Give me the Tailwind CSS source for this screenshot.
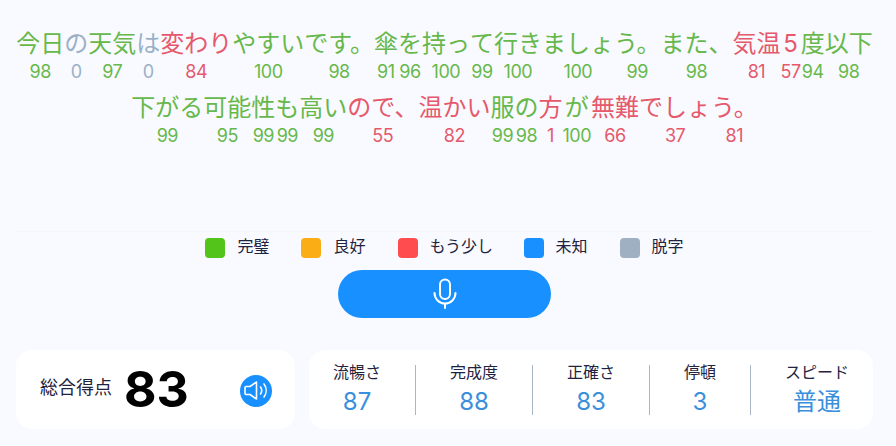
<!DOCTYPE html>
<html lang="ja">
<head>
<meta charset="utf-8">
<script src="https://cdn.jsdelivr.net/npm/@tailwindcss/browser@4"></script>
</head>
<body class="m-0 bg-[#f8faff]">
<div class="flex h-[446px] w-[889px] flex-col overflow-hidden font-['Inter','Noto_Sans_CJK_JP',sans-serif]">
  <div class="h-[231px] px-2 pt-[26px]">
    <div class="flex flex-wrap justify-center gap-y-2 text-center">
      <div class="text-[#67b84b]"><div class="text-2xl leading-9">今日</div><div class="text-lg leading-5 tracking-tight">98</div></div>
      <div class="text-[#9bb0c7]"><div class="text-2xl leading-9">の</div><div class="text-lg leading-5 tracking-tight">0</div></div>
      <div class="text-[#67b84b]"><div class="text-2xl leading-9">天気</div><div class="text-lg leading-5 tracking-tight">97</div></div>
      <div class="text-[#9bb0c7]"><div class="text-2xl leading-9">は</div><div class="text-lg leading-5 tracking-tight">0</div></div>
      <div class="text-[#e5596b]"><div class="text-2xl leading-9">変わり</div><div class="text-lg leading-5 tracking-tight">84</div></div>
      <div class="text-[#67b84b]"><div class="text-2xl leading-9">やすい</div><div class="text-lg leading-5 tracking-tight">100</div></div>
      <div class="text-[#67b84b]"><div class="text-2xl leading-9">です。</div><div class="text-lg leading-5 tracking-tight">98</div></div>
      <div class="text-[#67b84b]"><div class="text-2xl leading-9">傘</div><div class="text-lg leading-5 tracking-tight">91</div></div>
      <div class="text-[#67b84b]"><div class="text-2xl leading-9">を</div><div class="text-lg leading-5 tracking-tight">96</div></div>
      <div class="text-[#67b84b]"><div class="text-2xl leading-9">持っ</div><div class="text-lg leading-5 tracking-tight">100</div></div>
      <div class="text-[#67b84b]"><div class="text-2xl leading-9">て</div><div class="text-lg leading-5 tracking-tight">99</div></div>
      <div class="text-[#67b84b]"><div class="text-2xl leading-9">行き</div><div class="text-lg leading-5 tracking-tight">100</div></div>
      <div class="text-[#67b84b]"><div class="text-2xl leading-9">ましょ</div><div class="text-lg leading-5 tracking-tight">100</div></div>
      <div class="text-[#67b84b]"><div class="text-2xl leading-9">う。</div><div class="text-lg leading-5 tracking-tight">99</div></div>
      <div class="text-[#67b84b]"><div class="text-2xl leading-9">また、</div><div class="text-lg leading-5 tracking-tight">98</div></div>
      <div class="text-[#e5596b]"><div class="text-2xl leading-9">気温</div><div class="text-lg leading-5 tracking-tight">81</div></div>
      <div class="text-[#e5596b]"><div class="text-2xl leading-9">5</div><div class="text-lg leading-5 tracking-tight">57</div></div>
      <div class="text-[#67b84b]"><div class="text-2xl leading-9">度</div><div class="text-lg leading-5 tracking-tight">94</div></div>
      <div class="text-[#67b84b]"><div class="text-2xl leading-9">以下</div><div class="text-lg leading-5 tracking-tight">98</div></div>
      <div class="text-[#67b84b]"><div class="text-2xl leading-9">下がる</div><div class="text-lg leading-5 tracking-tight">99</div></div>
      <div class="text-[#67b84b]"><div class="text-2xl leading-9">可能</div><div class="text-lg leading-5 tracking-tight">95</div></div>
      <div class="text-[#67b84b]"><div class="text-2xl leading-9">性</div><div class="text-lg leading-5 tracking-tight">99</div></div>
      <div class="text-[#67b84b]"><div class="text-2xl leading-9">も</div><div class="text-lg leading-5 tracking-tight">99</div></div>
      <div class="text-[#67b84b]"><div class="text-2xl leading-9">高い</div><div class="text-lg leading-5 tracking-tight">99</div></div>
      <div class="text-[#e5596b]"><div class="text-2xl leading-9">ので、</div><div class="text-lg leading-5 tracking-tight">55</div></div>
      <div class="text-[#e5596b]"><div class="text-2xl leading-9">温かい</div><div class="text-lg leading-5 tracking-tight">82</div></div>
      <div class="text-[#67b84b]"><div class="text-2xl leading-9">服</div><div class="text-lg leading-5 tracking-tight">99</div></div>
      <div class="text-[#67b84b]"><div class="text-2xl leading-9">の</div><div class="text-lg leading-5 tracking-tight">98</div></div>
      <div class="text-[#e5596b]"><div class="text-2xl leading-9">方</div><div class="text-lg leading-5 tracking-tight">1</div></div>
      <div class="text-[#67b84b]"><div class="text-2xl leading-9">が</div><div class="text-lg leading-5 tracking-tight">100</div></div>
      <div class="text-[#e5596b]"><div class="text-2xl leading-9">無難</div><div class="text-lg leading-5 tracking-tight">66</div></div>
      <div class="text-[#e5596b]"><div class="text-2xl leading-9">でしょ</div><div class="text-lg leading-5 tracking-tight">37</div></div>
      <div class="text-[#e5596b]"><div class="text-2xl leading-9">う。</div><div class="text-lg leading-5 tracking-tight">81</div></div>
    </div>
  </div>
  <div class="mx-4 flex h-[29px] items-start justify-center gap-8 border-t border-[#f4f6fb] pt-[6px] text-base leading-5 text-[#1f2340]">
    <div class="flex h-5 items-center gap-3"><span class="size-5 rounded bg-[#52c41a]"></span><span class="pb-1">完璧</span></div>
    <div class="flex h-5 items-center gap-3"><span class="size-5 rounded bg-[#faad14]"></span><span class="pb-1">良好</span></div>
    <div class="flex h-5 items-center gap-3"><span class="size-5 rounded bg-[#ff4d4f]"></span><span class="w-[62px] whitespace-nowrap pb-1">もう少し</span></div>
    <div class="flex h-5 items-center gap-3"><span class="size-5 rounded bg-[#1890ff]"></span><span class="pb-1">未知</span></div>
    <div class="flex h-5 items-center gap-3"><span class="size-5 rounded bg-[#9fb0c2]"></span><span class="pb-1">脱字</span></div>
  </div>
  <div class="mt-[10px] flex justify-center">
    <div class="flex h-12 w-[213px] items-center justify-center rounded-full bg-[#1890ff]">
      <svg width="32" height="32" viewBox="0 0 32 32" fill="none" stroke="#fff" stroke-width="2" stroke-linecap="round"><rect x="11" y="1.500" width="10" height="19.500" rx="5"/><path d="M5.500 15a10.500 10.500 0 0 0 21 0M16 25.500V30"/></svg>
    </div>
  </div>
  <div class="mt-8 flex gap-[14px] px-4">
    <div class="flex h-[79px] w-[279px] items-center rounded-2xl bg-white pl-6 pr-[23px]">
      <span class="pb-[3px] text-lg text-[#1f2340]">総合得点</span>
      <span class="ml-3 text-[50px] font-bold text-black">83</span>
      <span class="ml-auto mt-[2px] flex size-8 items-center justify-center rounded-full bg-[#1890ff]">
        <svg width="32" height="32" viewBox="0 0 32 32" fill="none" stroke="#fff" stroke-width="1.600" stroke-linejoin="round" stroke-linecap="round"><path d="M6 11.500h4l6.500-4.500v17l-6.500-4.500H6a1 1 0 0 1-1-1v-6a1 1 0 0 1 1-1z"/><path d="M20.500 12a6 6 0 0 1 0 7M24 9a11 11 0 0 1 0 13"/></svg>
      </span>
    </div>
    <div class="flex h-[79px] w-[564px] items-center justify-between rounded-2xl bg-white px-6 text-center">
      <div><div class="mb-1 text-base leading-5 text-[#1f2340]">流暢さ</div><div class="text-2xl leading-8 text-[#3b8fdb]">87</div></div>
      <div class="h-[50px] w-px bg-[#a9b6c4]"></div>
      <div><div class="mb-1 text-base leading-5 text-[#1f2340]">完成度</div><div class="text-2xl leading-8 text-[#3b8fdb]">88</div></div>
      <div class="h-[50px] w-px bg-[#a9b6c4]"></div>
      <div><div class="mb-1 text-base leading-5 text-[#1f2340]">正確さ</div><div class="text-2xl leading-8 text-[#3b8fdb]">83</div></div>
      <div class="h-[50px] w-px bg-[#a9b6c4]"></div>
      <div><div class="mb-1 text-base leading-5 text-[#1f2340]">停頓</div><div class="text-2xl leading-8 text-[#3b8fdb]">3</div></div>
      <div class="h-[50px] w-px bg-[#a9b6c4]"></div>
      <div><div class="mb-1 text-base leading-5 text-[#1f2340]">スピード</div><div class="text-2xl leading-8 text-[#3b8fdb]">普通</div></div>
    </div>
  </div>
</div>
</body>
</html>
